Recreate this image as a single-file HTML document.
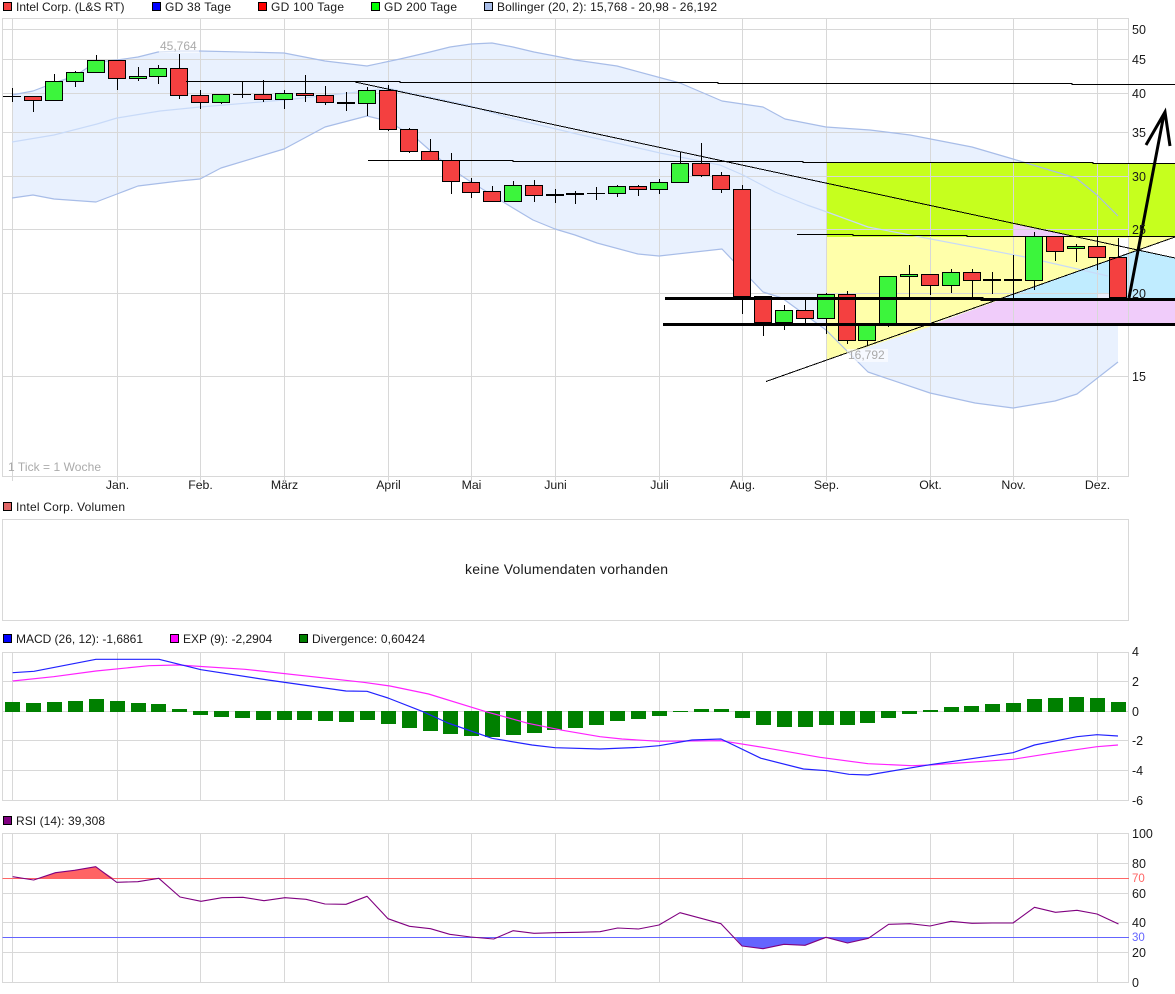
<!DOCTYPE html>
<html><head><meta charset="utf-8"><title>Intel Corp. Chart</title>
<style>
html,body{margin:0;padding:0;background:#fff}
svg{display:block}
text{font-family:"Liberation Sans",sans-serif;font-size:12px;fill:#1a1a1a}
.a text{font-size:12.5px}
</style></head><body>
<svg width="1175" height="994" viewBox="0 0 1175 994" xmlns="http://www.w3.org/2000/svg">
<!-- Bollinger fill -->
<path fill="#e9f1fe" d="M12 95L33 91 54 83 75 76 96 62 117 60 138 57 158 52 179 51 200 51 284 53 325 61 367 66 400 59 430 52 450 47 471 44 492 43 513 47 534 52 555 56 575 60 617 66 680 83 722 101 763 107 785 119 826 127 870 130 910 135 972 147 1013 159 1076 178 1097 195 1118 216V362L1077 394 1055 401 1013 408 975 403 930 393 868 372 826 330 782 298 763 292 722 249 659 256 638 254 597 243 575 235 555 229 533 220 513 208 471 182 450 168 417 139 388 121 367 116 325 127 284 149 221 168 200 179 179 181 138 186 117 194 96 202 54 199 33 195 12 198Z"/>
<!-- Zones -->
<path fill="#c6ff1e" d="M827 163H1175V237H827Z"/>
<path fill="#f0ccfa" d="M1013 224L1076 237H1013Z"/>
<path fill="#ffffaa" d="M827 237H1175V238L1138 250 935 322 935 325 827 360Z"/>
<path fill="#ffffaa" d="M827 298H1005L935 323 827 360Z"/>
<path fill="#fff" d="M1118 238H1128V254L1118 257Z"/>
<path fill="#fff" d="M1138 250L1175 237V258Z"/>
<path fill="#c0ecff" d="M1005 298L1138 250 1175 258V298Z"/>
<path fill="#f0ccfa" d="M1005 298H1175V325H932Z"/>
<path fill="#e9eefb" d="M1098 293H1118V298H1098Z"/>
<!-- Grid: main -->
<g fill="none" stroke="#d8d8d8" stroke-width="1">
<path d="M2.5 18.5H1128.5V476.5H2.5ZM2.5 29.5H1128.5M2.5 59.5H1128.5M2.5 93.5H1128.5M2.5 132.5H1128.5M2.5 176.5H1128.5M2.5 229.5H1128.5M2.5 293.5H1128.5M2.5 376.5H1128.5"/>
<path d="M12.5 18V481M117.5 18V481M200.5 18V481M284.5 18V481M388.5 18V481M471.5 18V481M555.5 18V481M659.5 18V481M742.5 18V481M826.5 18V481M930.5 18V481M1013.5 18V481M1097.5 18V481"/>
<!-- volume -->
<path d="M2.5 519.5H1128.5V620.5H2.5Z"/>
<!-- MACD -->
<path d="M2.5 652.5H1128.5V800.5H2.5ZM2.5 681.5H1128.5M2.5 711.5H1128.5M2.5 740.5H1128.5M2.5 770.5H1128.5"/>
<path d="M12.5 652V800M117.5 652V800M200.5 652V800M284.5 652V800M388.5 652V800M471.5 652V800M555.5 652V800M659.5 652V800M742.5 652V800M826.5 652V800M930.5 652V800M1013.5 652V800M1097.5 652V800"/>
<!-- RSI -->
<path d="M2.5 833.5H1128.5V982.5H2.5ZM2.5 863.5H1128.5M2.5 893.5H1128.5M2.5 922.5H1128.5M2.5 952.5H1128.5"/>
<path d="M12.5 833V982M117.5 833V982M200.5 833V982M284.5 833V982M388.5 833V982M471.5 833V982M555.5 833V982M659.5 833V982M742.5 833V982M826.5 833V982M930.5 833V982M1013.5 833V982M1097.5 833V982"/>
</g>
<!-- Bollinger lines -->
<g fill="none" stroke-width="1.2" stroke-linejoin="round">
<path stroke="#c8daf8" d="M12 142L54 135 97 124 117 118 160 111 200 107 284 100 367 91 388 88 400 91 467 105 510 118 577 134 660 153 720 165 743 175 775 192 807 205 827 212 868 227 910 235 1025 257 1108 276"/>
<path stroke="#a8bde8" d="M12 95L33 91 54 83 75 76 96 62 117 60 138 57 158 52 179 51 200 51 284 53 325 61 367 66 400 59 430 52 450 47 471 44 492 43 513 47 534 52 555 56 575 60 617 66 680 83 722 101 763 107 785 119 826 127 870 130 910 135 972 147 1013 159 1076 178 1097 195 1118 216"/>
<path stroke="#a8bde8" d="M12 198L33 195 54 199 96 202 117 194 138 186 179 181 200 179 221 168 284 149 325 127 367 116 388 121 417 139 450 168 471 182 513 208 533 220 555 229 575 235 597 243 638 254 659 256 722 249 763 292 782 298 826 330 868 372 930 393 975 403 1013 408 1055 401 1077 394 1118 362"/>
</g>
<!-- Wicks -->
<path stroke="#000" stroke-width="1" fill="none" shape-rendering="crispEdges" d="M12.5 88V102M33.5 96V112M54.5 74V100M75.5 71V87M96.5 55V72M117.5 60V90M138.5 67V81M158.5 65V84M179.5 54V99M200.5 90V109M221.5 94V104M242.5 82V98M263.5 80V102M284.5 90V109M305.5 75V102M325.5 86V105M346.5 92V111M367.5 87V116M388.5 85V131M409.5 128V153M430.5 139V160M451.5 153V194M471.5 178V198M492.5 186V201M513.5 181V201M534.5 180V202M555.5 189V203M575.5 191V204M596.5 187V200M617.5 185V197M638.5 185V196M659.5 179V194M680.5 152V182M701.5 143V177M721.5 172V193M742.5 185V314M763.5 296V336M784.5 305V330M805.5 298V323M826.5 293V334M847.5 291V344M867.5 324V345M888.5 276V327M909.5 265V298M930.5 274V295M951.5 269V293M972.5 269V298M992.5 272V294M1013.5 255V298M1034.5 232V290M1055.5 236V261M1076.5 244V262M1097.5 236V270M1118.5 238V298"/>
<!-- Doji -->
<path stroke="#000" stroke-width="1" fill="none" shape-rendering="crispEdges" d="M3 96.5H21M233 94.5H251M587 193.5H605"/>
<path stroke="#000" stroke-width="2" fill="none" shape-rendering="crispEdges" d="M337 103H355M546 195H564M566 194H584M983 280H1001M1004 280H1022"/>
<!-- Red bodies -->
<g fill="#f44040" stroke="#000" stroke-width="1" shape-rendering="crispEdges" transform="translate(-.5 0)">
<rect x="25" y="96.5" width="17" height="4"/><rect x="109" y="60.5" width="17" height="18"/><rect x="171" y="68.5" width="17" height="27"/><rect x="192" y="95.5" width="17" height="7"/><rect x="255" y="94.5" width="17" height="5"/><rect x="297" y="93.5" width="17" height="2"/><rect x="317" y="95.5" width="17" height="7"/><rect x="380" y="90.5" width="17" height="39"/><rect x="401" y="129.5" width="17" height="22"/><rect x="422" y="151.5" width="17" height="9"/><rect x="443" y="160.5" width="17" height="21"/><rect x="463" y="182.5" width="17" height="10"/><rect x="484" y="191.5" width="17" height="10"/><rect x="526" y="185.5" width="17" height="10"/><rect x="630" y="186.5" width="17" height="3"/><rect x="693" y="163.5" width="17" height="12"/><rect x="713" y="175.5" width="17" height="14"/><rect x="734" y="189.5" width="17" height="107"/><rect x="755" y="296.5" width="17" height="26"/><rect x="797" y="310.5" width="17" height="8"/><rect x="839" y="294.5" width="17" height="46"/><rect x="922" y="274.5" width="17" height="11"/><rect x="964" y="272.5" width="17" height="8"/><rect x="1047" y="236.5" width="17" height="15"/><rect x="1089" y="246.5" width="17" height="11"/><rect x="1110" y="257.5" width="17" height="40"/>
</g>
<!-- Green bodies -->
<g fill="#3cf53c" stroke="#000" stroke-width="1" shape-rendering="crispEdges" transform="translate(-.5 0)">
<rect x="46" y="81.5" width="17" height="19"/><rect x="67" y="72.5" width="17" height="9"/><rect x="88" y="60.5" width="17" height="12"/><rect x="130" y="76.5" width="17" height="2"/><rect x="150" y="68.5" width="17" height="8"/><rect x="213" y="94.5" width="17" height="8"/><rect x="276" y="93.5" width="17" height="6"/><rect x="359" y="90.5" width="17" height="13"/><rect x="505" y="185.5" width="17" height="16"/><rect x="609" y="186.5" width="17" height="7"/><rect x="651" y="182.5" width="17" height="7"/><rect x="672" y="163.5" width="17" height="19"/><rect x="776" y="310.5" width="17" height="12"/><rect x="818" y="294.5" width="17" height="24"/><rect x="859" y="324.5" width="17" height="16"/><rect x="880" y="276.5" width="17" height="48"/><rect x="901" y="274.5" width="17" height="2"/><rect x="943" y="272.5" width="17" height="13"/><rect x="1026" y="236.5" width="17" height="44"/><rect x="1068" y="246.5" width="17" height="2"/>
</g>
<!-- Trend lines -->
<g fill="none" stroke="#000" stroke-width="1" shape-rendering="crispEdges">
<path d="M186 81.5H400V82.5H718V83.5H1072V84.5H1175"/>
<path d="M355 82L1175 258"/>
<path d="M368 160.5H513V161.5H803V162.5H1093V163.5H1175"/>
<path d="M797 234.5H853V235.5H967V236.5H1175"/>
<path d="M766 381.5L1175 237"/>
</g>
<path fill="none" stroke="#000" stroke-width="3" shape-rendering="crispEdges" d="M665 298.5H982V299.5H1175M663 324.5H1175"/>
<path fill="none" stroke="#000" stroke-width="3" d="M1129 298L1164 114M1146 145L1165 112 1170 146"/>
<!-- Main labels -->
<rect x="159" y="39" width="40" height="14" fill="#fff" fill-opacity=".6"/>
<text x="160" y="50" style="fill:#aaa">45,764</text>
<rect x="847" y="349" width="41" height="13" fill="#fff" fill-opacity=".6"/>
<text x="848" y="359" style="fill:#aaa">16,792</text>
<text x="8" y="471" style="fill:#aaa" textLength="93" lengthAdjust="spacing">1 Tick = 1 Woche</text>
<g class="a">
<text x="1132" y="34">50</text><text x="1132" y="64">45</text><text x="1132" y="98">40</text><text x="1132" y="137">35</text><text x="1132" y="181">30</text><text x="1132" y="234">25</text><text x="1132" y="298">20</text><text x="1132" y="381">15</text>
</g>
<g text-anchor="middle" style="font-size:12.3px">
<text x="117.5" y="489" style="font-size:12.3px">Jan.</text><text x="200.5" y="489" style="font-size:12.3px">Feb.</text><text x="284.5" y="489" style="font-size:12.3px">März</text><text x="388.5" y="489" style="font-size:12.3px">April</text><text x="471.5" y="489" style="font-size:12.3px">Mai</text><text x="555.5" y="489" style="font-size:12.3px">Juni</text><text x="659.5" y="489" style="font-size:12.3px">Juli</text><text x="742.5" y="489" style="font-size:12.3px">Aug.</text><text x="826.5" y="489" style="font-size:12.3px">Sep.</text><text x="930.5" y="489" style="font-size:12.3px">Okt.</text><text x="1013.5" y="489" style="font-size:12.3px">Nov.</text><text x="1097.5" y="489" style="font-size:12.3px">Dez.</text>
</g>
<!-- Legend -->
<g stroke="#000" stroke-width="1">
<rect x="3.5" y="2.5" width="8" height="8" fill="#f44040"/>
<rect x="152.5" y="2.5" width="8" height="8" fill="#0000ff"/>
<rect x="258.5" y="2.5" width="8" height="8" fill="#ff0000"/>
<rect x="371.5" y="2.5" width="8" height="8" fill="#00ff00"/>
<rect x="484.5" y="2.5" width="8" height="8" fill="#a8bde8"/>
<rect x="3.5" y="502.5" width="8" height="8" fill="#e06666"/>
<rect x="3.5" y="634.5" width="8" height="8" fill="#0000ff"/>
<rect x="170.5" y="634.5" width="8" height="8" fill="#ff00ff"/>
<rect x="299.5" y="634.5" width="8" height="8" fill="#008000"/>
<rect x="3.5" y="816.5" width="8" height="8" fill="#800080"/>
</g>
<text x="16" y="11">Intel Corp. (L&amp;S RT)</text>
<text x="165" y="11" textLength="66" lengthAdjust="spacing">GD 38 Tage</text>
<text x="271" y="11" textLength="73" lengthAdjust="spacing">GD 100 Tage</text>
<text x="384" y="11" textLength="73" lengthAdjust="spacing">GD 200 Tage</text>
<text x="497" y="11" textLength="220" lengthAdjust="spacing">Bollinger (20, 2): 15,768 - 20,98 - 26,192</text>
<text x="16" y="511" textLength="109" lengthAdjust="spacing">Intel Corp. Volumen</text>
<text x="465" y="574" style="font-size:14px" textLength="203" lengthAdjust="spacing">keine Volumendaten vorhanden</text>
<text x="16" y="643" textLength="127" lengthAdjust="spacing">MACD (26, 12): -1,6861</text>
<text x="183" y="643">EXP (9): -2,2904</text>
<text x="312" y="643" textLength="113" lengthAdjust="spacing">Divergence: 0,60424</text>
<text x="16" y="825" textLength="89" lengthAdjust="spacing">RSI (14): 39,308</text>
<!-- Divergence bars -->
<path fill="#008000" d="M5 702h15v10H5ZM26 703h15v9H26ZM47 702h15v10H47ZM68 701h15v11H68ZM89 699h15v13H89ZM110 701h15v11H110ZM131 703h15v9H131ZM151 704h15v8H151ZM172 709h15v3H172ZM193 711h15v4H193ZM214 711h15v6H214ZM235 711h15v7H235ZM256 711h15v9H256ZM277 711h15v9H277ZM297 711h15v9H297ZM318 711h15v10H318ZM339 711h15v11H339ZM360 711h15v9H360ZM381 711h15v13H381ZM402 711h15v17H402ZM423 711h15v20H423ZM443 711h15v23H443ZM464 711h15v25H464ZM485 711h15v26H485ZM506 711h15v24H506ZM527 711h15v22H527ZM547 711h15v19H547ZM568 711h15v17H568ZM589 711h15v14H589ZM610 711h15v10H610ZM631 711h15v8H631ZM652 711h15v5H652ZM673 711h15v1H673ZM694 709h15v3H694ZM714 709h15v3H714ZM735 711h15v7H735ZM756 711h15v14H756ZM777 711h15v16H777ZM798 711h15v16H798ZM819 711h15v14H819ZM840 711h15v14H840ZM860 711h15v12H860ZM881 711h15v7H881ZM902 711h15v3H902ZM923 710h15v2H923ZM944 707h15v5H944ZM964 706h15v6H964ZM985 704h15v8H985ZM1006 703h15v9H1006ZM1027 699h15v13H1027ZM1048 698h15v14H1048ZM1069 697h15v15H1069ZM1090 698h15v14H1090ZM1111 702h15v10H1111Z"/>
<g fill="none" stroke-width="1.2" stroke-linejoin="round">
<path stroke="#ff22ff" d="M12.6 681L53.6 676.7 96 671 149 665.7 178 665 245 669.3 363.5 682.3 390 686 428.6 694 486 711.7 528 723.3 562.6 730.3 600 736.7 622 739 659 741.3 721 740.7 765 747.7 820 757.3 868 763.7 912 765.7 930 765 1013 759.3 1055 752.7 1097 746.7 1118 745"/>
<path stroke="#2222ff" d="M12.6 672.7L34 671.3 96 659.3 159 659.3 201 669.7 268 680 346 691 367 691.3 388 698 423 711.7 448 723 492 738.3 532 745 555 747.7 600 749 640 747.3 659 745.7 692 740 721 739 761 758.3 803.5 769 827 770.7 849 774.3 868 775 930 764.7 1013 752.7 1034.5 745 1077 736.7 1097 734.7 1118 736"/>
</g>
<g class="a">
<text x="1132" y="656">4</text><text x="1132" y="686">2</text><text x="1132" y="716">0</text><text x="1132" y="745">-2</text><text x="1132" y="775">-4</text><text x="1132" y="805">-6</text>
</g>
<!-- RSI -->
<path fill="#ff6464" d="M12.6 876.7L18 878ZM40 878L55.5 872.7 74.6 870.3 95.7 866.7 113 878Z"/>
<path fill="#6464ff" d="M735 937L742 946 763 948.7 784 944.3 805 945.3 826 937.3 847.5 943 868.4 938.3 871 937Z"/>
<path stroke="#ff6464" fill="none" stroke-width="1" d="M2.5 878.5H1129"/>
<path stroke="#6464ff" fill="none" stroke-width="1" d="M2.5 937.5H1129"/>
<path fill="none" stroke="#800080" stroke-width="1.1" stroke-linejoin="round" d="M12.6 876.7L33.7 880 55.5 872.7 74.6 870.3 95.7 866.7 116.7 882.3 137.8 881.7 158.8 878.3 180 897 201 901.3 222 897.7 243 897.3 264 900.7 285 897.7 306 899.3 325 904 346 904.3 367 896.3 388 918.7 409.5 926.3 430.5 928.7 449.7 934.3 470.7 937 493.7 939 513 930.7 534 933.3 555 932.7 578 932.3 600 931.7 617.6 928 638.5 929 659 925 680 912.7 701 918.3 721 923.7 742 946 763 948.7 784 944.3 805 945.3 826 937.3 847.5 943 868.4 938.3 888.6 924.3 910 923.7 930 926 951 921.3 972 923.3 992 923 1013 923 1034.5 907.3 1055.5 912.3 1077 910.3 1097 914 1118.5 924"/>
<g class="a">
<text x="1132" y="838">100</text><text x="1132" y="868">80</text><text x="1132" y="898">60</text><text x="1132" y="927">40</text><text x="1132" y="957">20</text><text x="1132" y="987">0</text>
</g>
<text x="1132" y="882" style="fill:#ff6464;font-size:11.5px">70</text>
<text x="1132" y="941" style="fill:#6464ff;font-size:11.5px">30</text>
</svg>
</body></html>
